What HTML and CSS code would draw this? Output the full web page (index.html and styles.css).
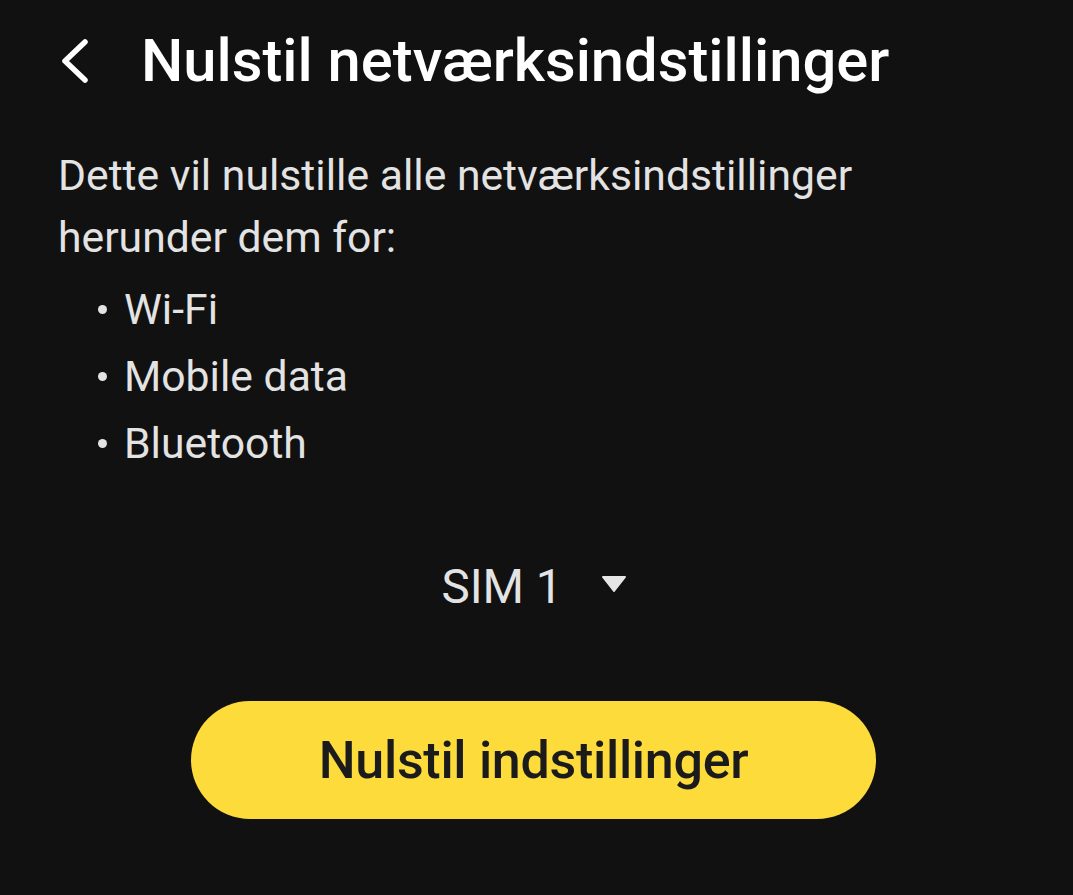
FILE: index.html
```html
<!DOCTYPE html>
<html lang="da">
<head>
<meta charset="utf-8">
<link rel="stylesheet" href="styles.css">
</head>
<body>
<div class="screen">
  <header class="topbar">
    <button class="back" aria-label="Tilbage">
      <svg width="34" height="46" viewBox="0 0 34 46"><path d="M27 4 L7 23 L27 42" fill="none" stroke="#fff" stroke-width="5.5" stroke-linecap="round" stroke-linejoin="round"/></svg>
    </button>
    <h1 class="title">Nulstil netværksindstillinger</h1>
  </header>
  <p class="desc">Dette vil nulstille alle netværksindstillinger herunder dem for:</p>
  <ul class="list">
    <li>Wi-Fi</li>
    <li>Mobile data</li>
    <li>Bluetooth</li>
  </ul>
  <div class="sim">
    <span class="sim-label">SIM 1</span>
    <svg class="caret" width="24" height="16" viewBox="0 0 24 16"><path d="M1 1 H23 L12 15 Z" fill="#e6e6e6" stroke="#e6e6e6" stroke-width="2" stroke-linejoin="round"/></svg>
  </div>
  <div class="actions">
    <button class="reset">Nulstil indstillinger</button>
  </div>
</div>
</body>
</html>
```
FILE: styles.css
```css
html, body {
  margin: 0;
  padding: 0;
  background: #111111;
}
.screen {
  width: 1073px;
  height: 895px;
  background: #111111;
  font-family: Roboto, "Noto Sans", sans-serif;
  color: #e3e3e3;
  overflow: hidden;
}
.topbar {
  display: flex;
  align-items: center;
  padding: 26px 0 0 58px;
  height: 70px;
}
.back {
  background: none;
  border: 0;
  padding: 0;
  width: 34px;
  height: 46px;
  display: flex;
  align-items: center;
}
.title {
  margin: 0 0 0 49px;
  font-size: 59.7px;
  font-weight: 500;
  color: #ffffff;
  letter-spacing: 0;
  white-space: nowrap;
}
.desc {
  margin: 48px 0 0 58px;
  width: 840px;
  font-size: 42.7px;
  line-height: 62px;
  color: #e3e3e3;
}
.list {
  list-style: none;
  margin: 8px 0 0 98px;
  padding: 0;
}
.list li {
  font-size: 42.7px;
  line-height: 67px;
  display: flex;
  align-items: center;
}
.list li::before {
  content: "";
  width: 9px;
  height: 9px;
  border-radius: 50%;
  background: #e3e3e3;
  margin-right: 17px;
}
.sim {
  display: flex;
  justify-content: center;
  align-items: center;
  gap: 39px;
  margin-top: 82px;
  padding-right: 6px;
}
.sim-label {
  font-size: 47.5px;
  color: #e3e3e3;
}
.caret {
  margin-top: -6px;
}
.actions {
  display: flex;
  justify-content: center;
  margin-top: 86px;
  padding-right: 6px;
}
.reset {
  width: 685px;
  height: 118px;
  border: 0;
  border-radius: 59px;
  background: #fddb3a;
  color: #1b1b1b;
  font-family: Roboto, "Noto Sans", sans-serif;
  font-size: 52px;
  font-weight: 500;
  letter-spacing: -0.3px;
}
```
